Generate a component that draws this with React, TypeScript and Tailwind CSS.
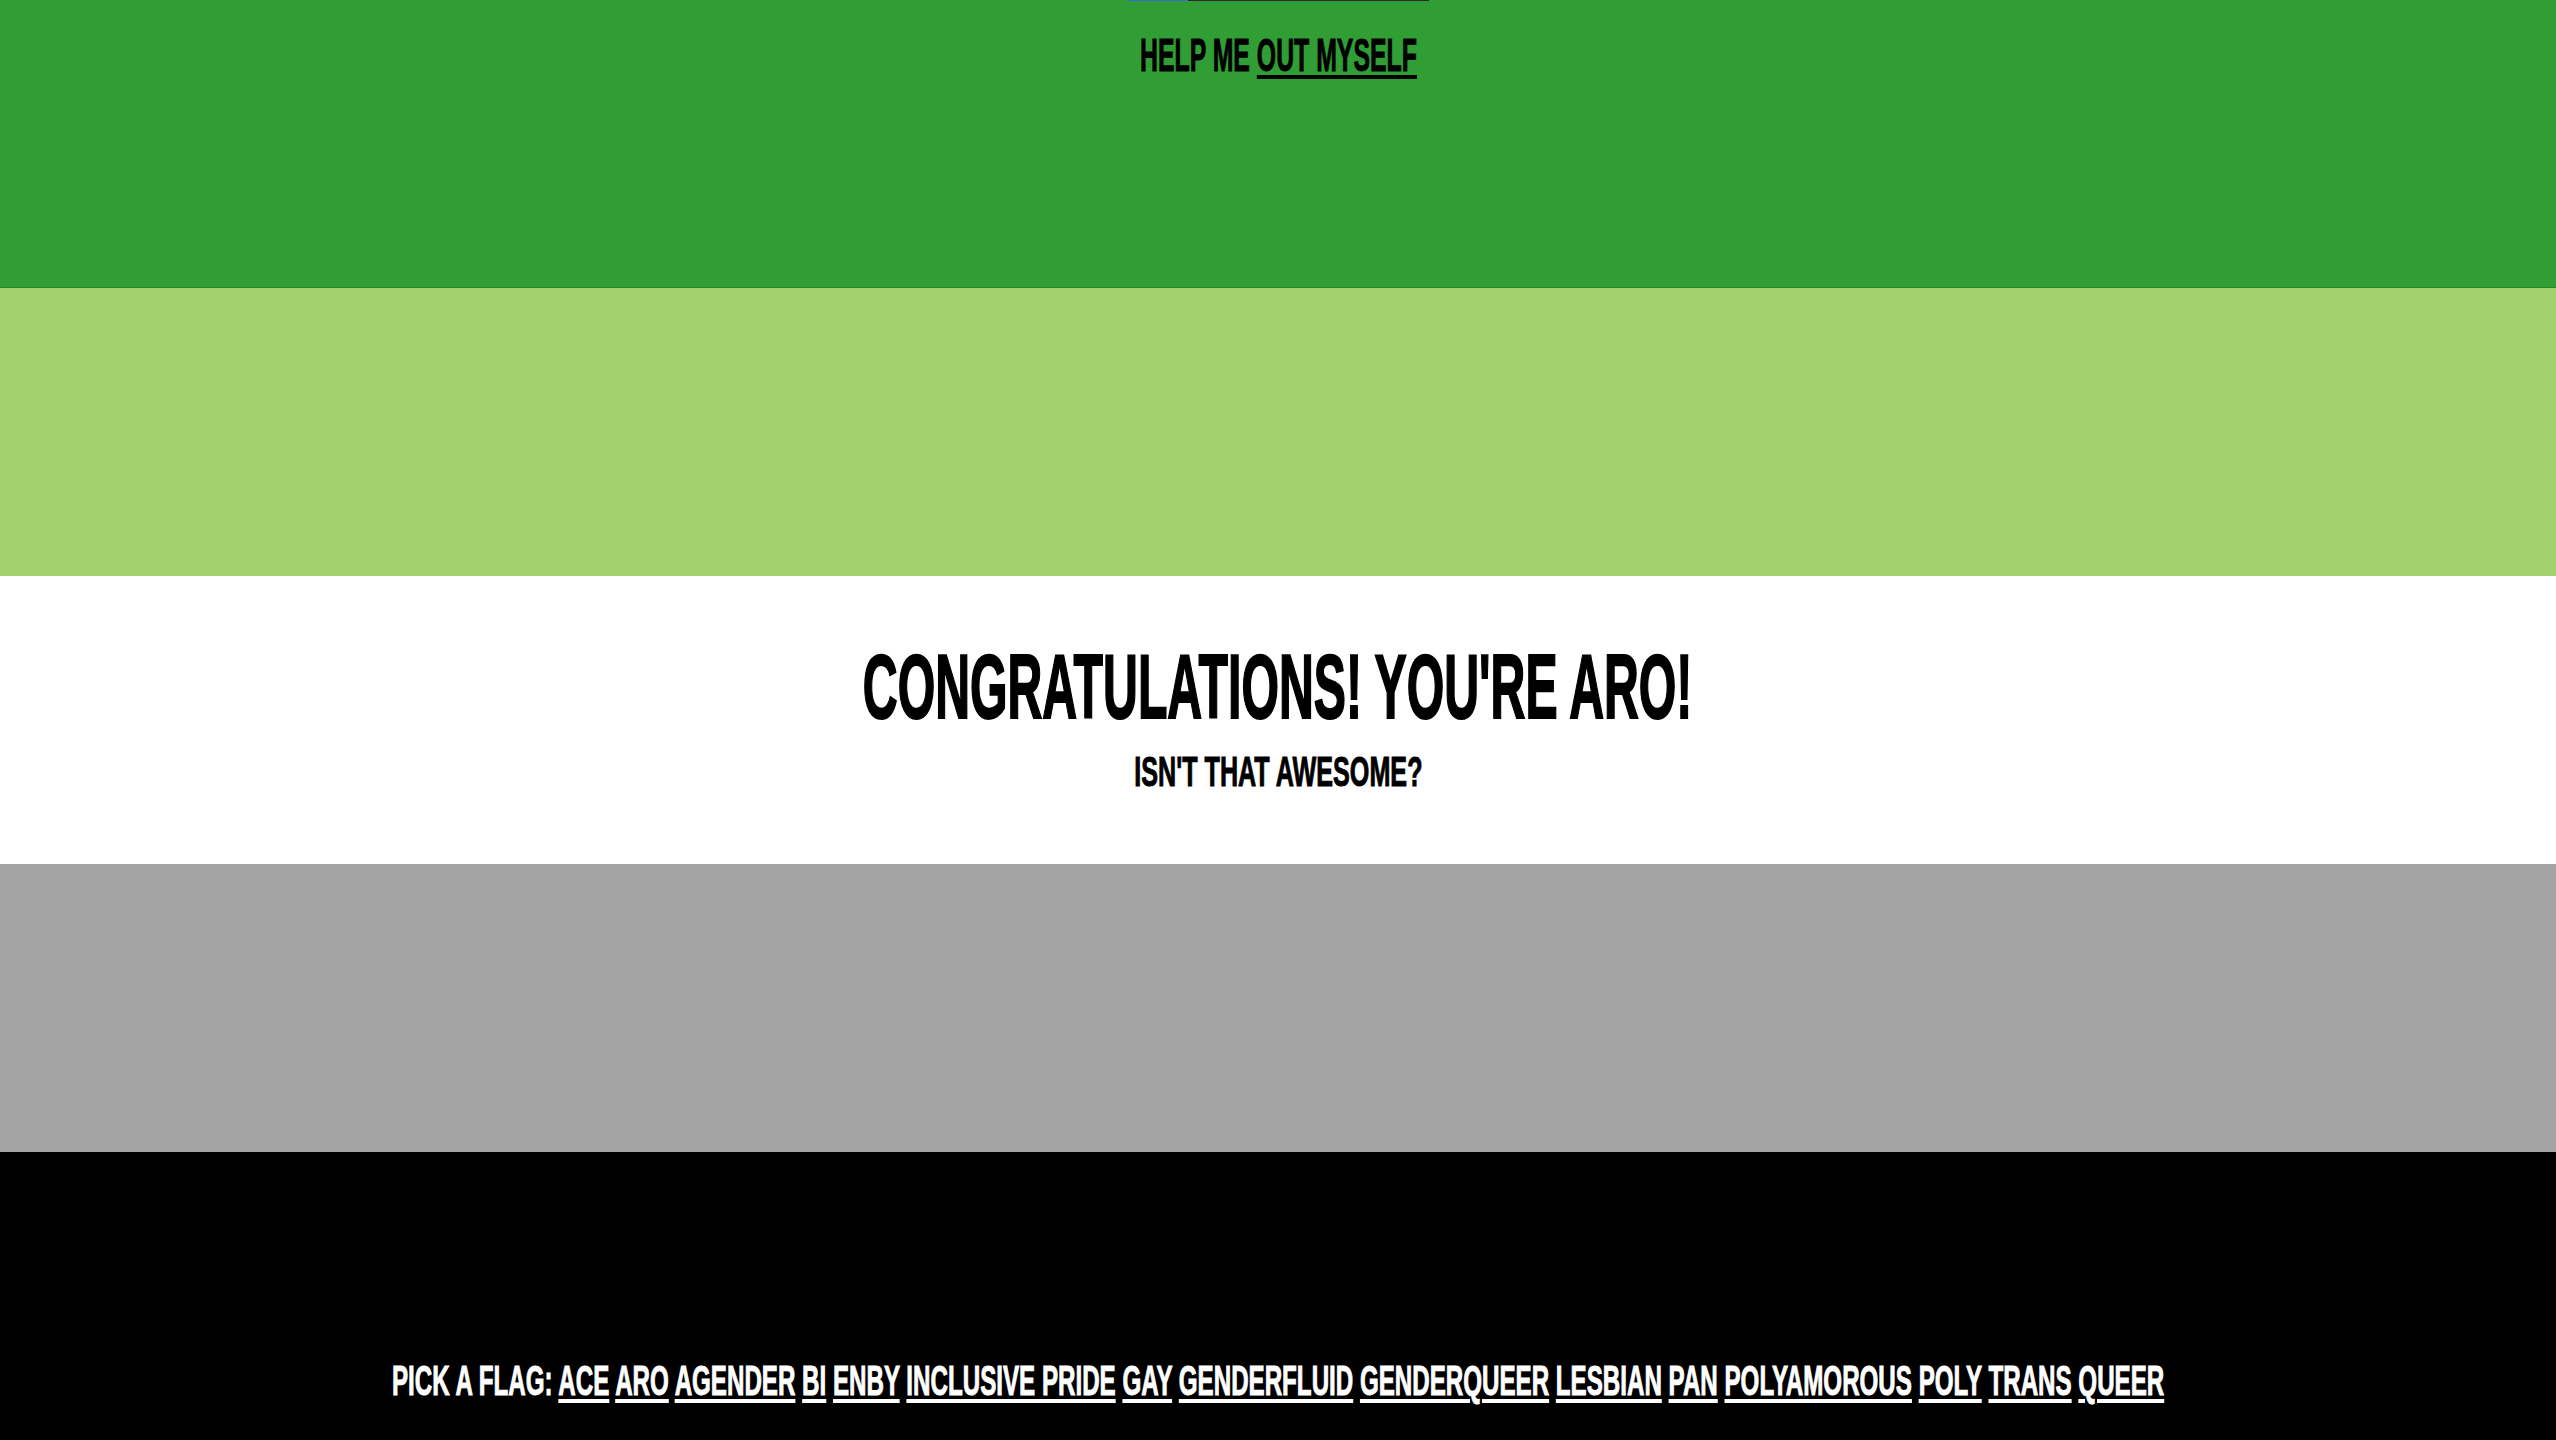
const flagLinks = [
  "Ace",
  "Aro",
  "Agender",
  "Bi",
  "Enby",
  "Inclusive Pride",
  "Gay",
  "Genderfluid",
  "Genderqueer",
  "Lesbian",
  "Pan",
  "Polyamorous",
  "Poly",
  "Trans",
  "Queer",
];

const display = "font-['Liberation_Sans',Arial,sans-serif] font-bold uppercase";

const App = () => {
  return (
    <div className={`w-full h-[1440px] overflow-hidden flex flex-col ${display}`}>
      {/* green stripe */}
      <div className="h-[288px] bg-[#309e35] border-b border-[#1f8d22] flex flex-col items-center">
        <div className="flex w-[301px] h-px">
          <div className="w-[60px] bg-[#3a6fd0]" />
          <div className="flex-1 bg-[#2a2a2a]" />
        </div>
        <h2 className="mt-[31px] text-[46px] leading-none text-black scale-x-[0.54] whitespace-nowrap [-webkit-text-stroke:1px_black]">
          Help me{" "}
          <a href="#" className="underline decoration-[4px] underline-offset-[4px]">
            out myself
          </a>
        </h2>
      </div>

      {/* light green stripe */}
      <div className="h-[288px] bg-[#a1d06c]" />

      {/* white stripe */}
      <div className="h-[288px] bg-white flex flex-col items-center">
        <h1 className="mt-[65px] text-[91px] leading-none text-black scale-x-[0.53] whitespace-nowrap [-webkit-text-stroke:2px_black]">
          Congratulations! You're aro!
        </h1>
        <p className="mt-[18px] text-[43px] leading-none text-black scale-x-[0.585] whitespace-nowrap [-webkit-text-stroke:1px_black]">
          Isn't that awesome?
        </p>
      </div>

      {/* gray stripe */}
      <div className="h-[288px] bg-[#a4a4a4]" />

      {/* black stripe */}
      <div className="h-[288px] bg-black flex flex-col items-center">
        <p className="mt-[208px] text-[42px] leading-none text-white scale-x-[0.575] whitespace-nowrap [-webkit-text-stroke:1px_white]">
          Pick a flag:{" "}
          {flagLinks.map((f, i) => (
            <span key={f}>
              <a href="#" className="underline decoration-[4px] underline-offset-[4px]">
                {f}
              </a>
              {i < flagLinks.length - 1 ? " " : ""}
            </span>
          ))}
        </p>
      </div>
    </div>
  );
};

export default App;
